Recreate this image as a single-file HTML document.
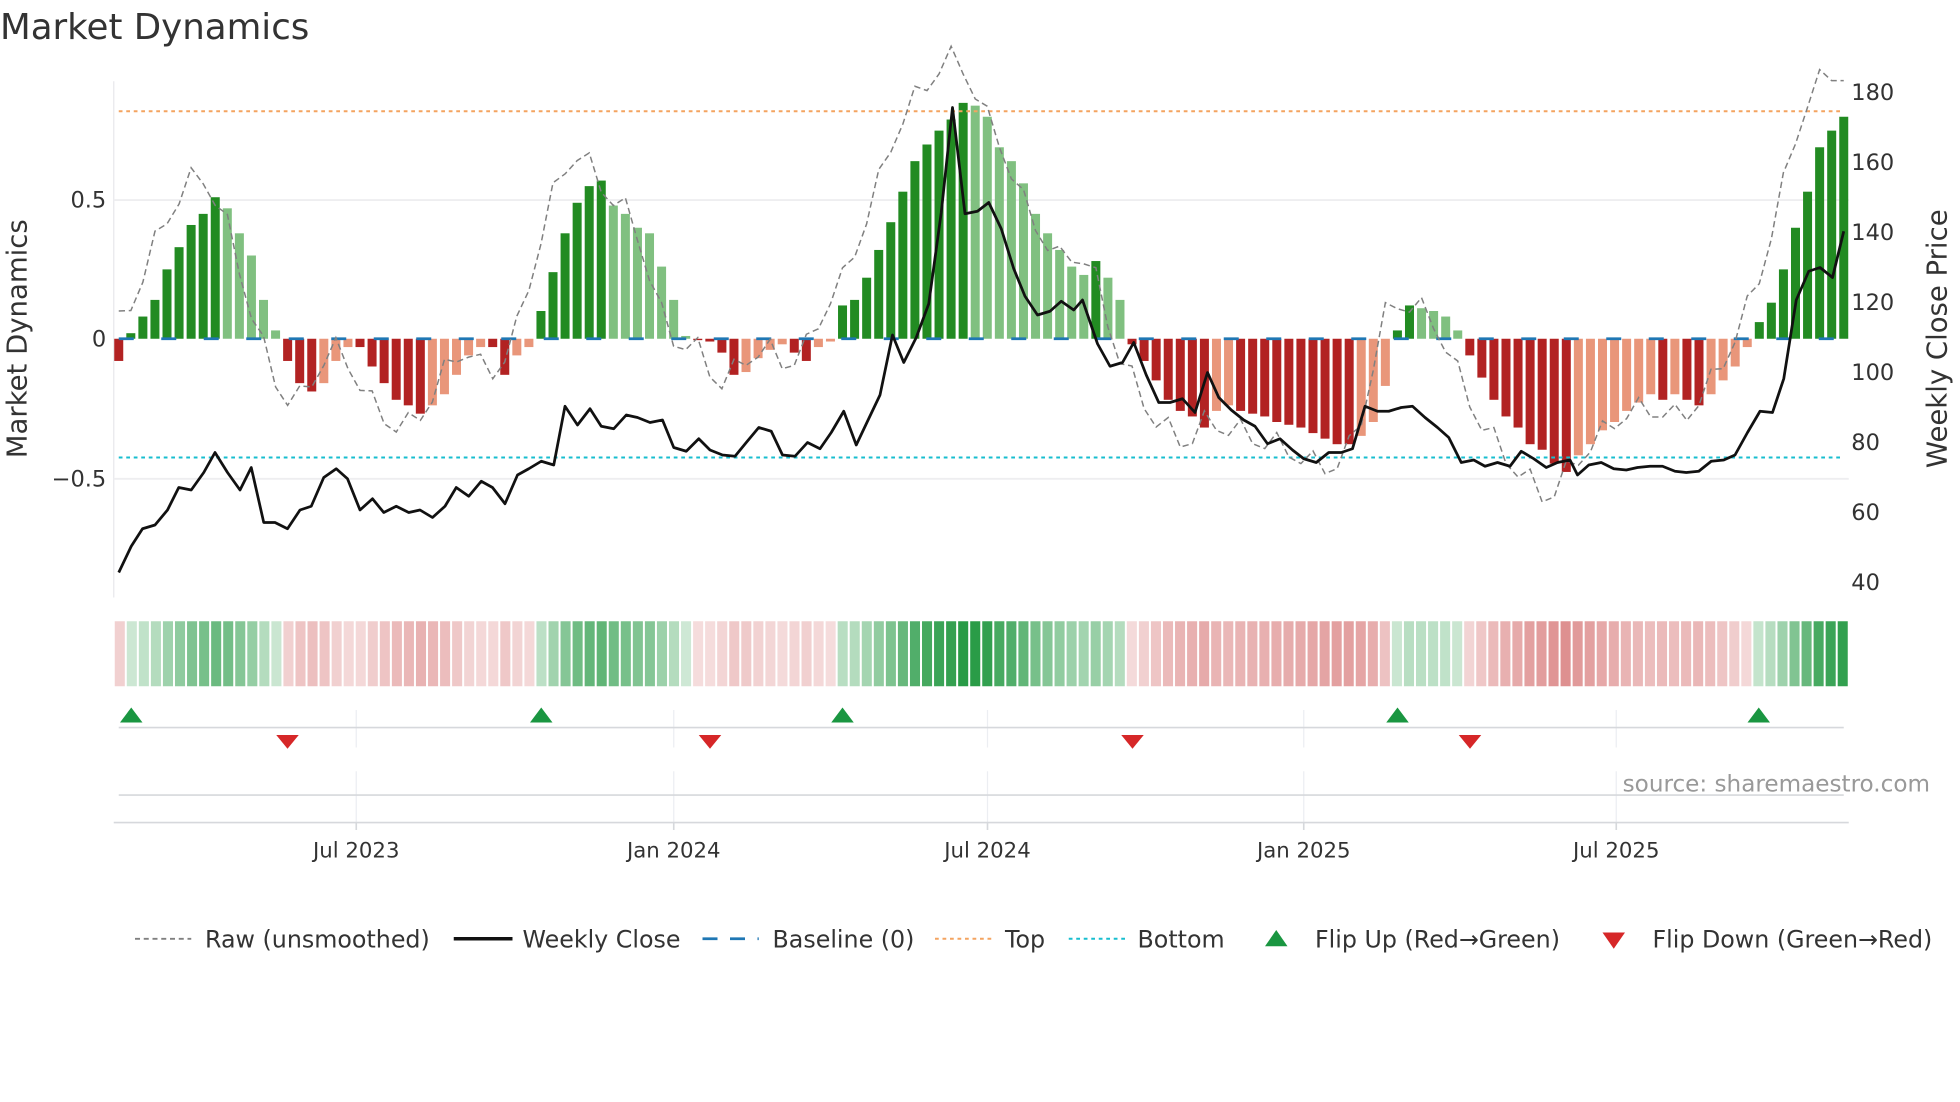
<!DOCTYPE html>
<html><head><meta charset="utf-8"><style>
html,body{margin:0;padding:0;background:#fff;width:1960px;height:1102px;overflow:hidden}
svg{display:block}
text{font-family:"DejaVu Sans","Liberation Sans",sans-serif}
</style></head><body>
<svg id="s" width="1960" height="1102" viewBox="0 0 1568 881.6" preserveAspectRatio="none" xmlns="http://www.w3.org/2000/svg">
<rect width="1568" height="882" fill="#fff"/>
<text x="0" y="31" font-size="28.5" fill="#333">Market Dynamics</text>
<line x1="91" y1="65" x2="91" y2="478" stroke="#e8e8ec" stroke-width="1"/>
<line x1="91" y1="160" x2="1479" y2="160" stroke="#eeeef0" stroke-width="1.5"/>
<line x1="91" y1="383" x2="1479" y2="383" stroke="#eeeef0" stroke-width="1.5"/>
<g id="bars"></g>
<line x1="95" y1="89" x2="1475" y2="89" stroke="#f4a460" stroke-width="1.6" stroke-dasharray="3,3"/>
<line x1="95" y1="366" x2="1475" y2="366" stroke="#17becf" stroke-width="1.6" stroke-dasharray="3,3"/>
<line x1="95" y1="271" x2="1475" y2="271" stroke="#1f77b4" stroke-width="2.2" stroke-dasharray="12,22"/>
<polyline id="raw" fill="none" stroke="#808080" stroke-width="1.2" stroke-dasharray="5,3"/>
<polyline id="price" fill="none" stroke="#111" stroke-width="2.2" stroke-linejoin="round"/>
<g font-size="18" fill="#333">
<text x="85" y="166" text-anchor="end">0.5</text>
<text x="85" y="277" text-anchor="end">0</text>
<text x="85" y="389" text-anchor="end">−0.5</text>
<text x="1481" y="80">180</text><text x="1481" y="136">160</text><text x="1481" y="192">140</text>
<text x="1481" y="248">120</text><text x="1481" y="304">100</text><text x="1481" y="360">80</text>
<text x="1481" y="416">60</text><text x="1481" y="472">40</text>
</g>
<text transform="translate(21,271) rotate(-90)" text-anchor="middle" font-size="22" fill="#333">Market Dynamics</text>
<text transform="translate(1557,271) rotate(-90)" text-anchor="middle" font-size="22" fill="#333">Weekly Close Price</text>
<g id="heat"></g>
<g stroke="#eceef2" stroke-width="1">
<line x1="285" y1="568" x2="285" y2="598"/><line x1="539" y1="568" x2="539" y2="598"/><line x1="790" y1="568" x2="790" y2="598"/><line x1="1043" y1="568" x2="1043" y2="598"/><line x1="1293" y1="568" x2="1293" y2="598"/>
<line x1="285" y1="617" x2="285" y2="658"/><line x1="539" y1="617" x2="539" y2="658"/><line x1="790" y1="617" x2="790" y2="658"/><line x1="1043" y1="617" x2="1043" y2="658"/><line x1="1293" y1="617" x2="1293" y2="658"/>
</g>
<line x1="95" y1="582" x2="1475" y2="582" stroke="#d6d8dc" stroke-width="1.3"/>
<line x1="95" y1="636" x2="1475" y2="636" stroke="#d6d8dc" stroke-width="1.3"/>
<line x1="91" y1="658" x2="1479" y2="658" stroke="#d6d8dc" stroke-width="1.3"/>
<g stroke="#d6d8dc" stroke-width="1.3"><line x1="285" y1="658" x2="285" y2="664"/><line x1="539" y1="658" x2="539" y2="664"/><line x1="790" y1="658" x2="790" y2="664"/><line x1="1043" y1="658" x2="1043" y2="664"/><line x1="1293" y1="658" x2="1293" y2="664"/></g>
<g id="flips"></g>
<text x="1544" y="633" text-anchor="end" font-size="18.5" fill="#999">source: sharemaestro.com</text>
<g font-size="17" fill="#333" text-anchor="middle">
<text x="285" y="686">Jul 2023</text><text x="539" y="686">Jan 2024</text><text x="790" y="686">Jul 2024</text><text x="1043" y="686">Jan 2025</text><text x="1293" y="686">Jul 2025</text>
</g>
<g font-size="19" fill="#333">
<line x1="108" y1="751" x2="153" y2="751" stroke="#808080" stroke-width="1.5" stroke-dasharray="4,3"/>
<text x="164" y="758">Raw (unsmoothed)</text>
<line x1="363" y1="751" x2="410" y2="751" stroke="#111" stroke-width="2.8"/>
<text x="418" y="758">Weekly Close</text>
<line x1="562" y1="751" x2="607" y2="751" stroke="#1f77b4" stroke-width="2.2" stroke-dasharray="12,10"/>
<text x="618" y="758">Baseline (0)</text>
<line x1="748" y1="751" x2="793" y2="751" stroke="#f4a460" stroke-width="1.6" stroke-dasharray="3,3"/>
<text x="804" y="758">Top</text>
<line x1="855" y1="751" x2="900" y2="751" stroke="#17becf" stroke-width="1.6" stroke-dasharray="3,3"/>
<text x="910" y="758">Bottom</text>
<polygon points="1012,757 1030,757 1021,744" fill="#1a9641"/>
<text x="1052" y="758">Flip Up (Red→Green)</text>
<polygon points="1282,746 1300,746 1291,759" fill="#d62728"/>
<text x="1322" y="758">Flip Down (Green→Red)</text>
</g>
</svg>
<script>
var v=[-0.08,.02,.08,.14,.25,.33,.41,.45,.51,.47,.38,.30,.14,.03,
-.08,-.16,-.19,-.16,-.08,-.03,-.03,-.10,-.16,-.22,-.24,-.27,-.24,-.20,-.13,-.06,-.03,-.03,-.13,-.06,-.03,
.10,.24,.38,.49,.55,.57,.48,.45,.40,.38,.26,.14,.01,
-.005,-.01,-.05,-.13,-.12,-.07,-.04,-.02,-.05,-.08,-.03,-.01,
.12,.14,.22,.32,.42,.53,.64,.70,.75,.79,.85,.84,.80,.69,.64,.56,.45,.38,.32,.26,.23,.28,.22,.14,
-.02,-.08,-.15,-.22,-.26,-.28,-.32,-.26,-.24,-.26,-.27,-.28,-.30,-.31,-.32,-.34,-.36,-.38,-.38,-.35,-.30,-.17,
.03,.12,.11,.10,.08,.03,
-.06,-.14,-.22,-.28,-.32,-.38,-.40,-.45,-.48,-.42,-.38,-.33,-.30,-.26,-.23,-.20,-.22,-.20,-.22,-.24,-.20,-.15,-.10,-.03,
.06,.13,.25,.40,.53,.69,.75,.80];
var N=v.length,x0=95,x1=1475,st=(x1-x0)/(N-1),Z=271,U=222;
var ns="http://www.w3.org/2000/svg";
function el(t,a,p){var e=document.createElementNS(ns,t);for(var k in a)e.setAttribute(k,a[k]);p.appendChild(e);return e;}
var B=document.getElementById('bars'),H=document.getElementById('heat');
var hx0=91,hw=(1479-91)/N;
for(var i=0;i<N;i++){
 var x=x0+st*i,val=v[i],p=i?v[i-1]:0,c;
 if(val>=0)c=(val>=p)?'#228b22':'#80c080';else c=(val<=p)?'#b22222':'#e9967a';
 var h=Math.abs(val)*U;
 el('rect',{x:x-3.6,y:val>=0?Z-h:Z,width:7.2,height:Math.max(h,0.5),fill:c},B);
 var a,col;
 if(val>=0){a=0.22+0.78*Math.min(val/0.85,1);col='rgba(40,155,70,'+a+')';}
 else{a=0.2+0.45*Math.min(-val/0.48,1);col='rgba(205,85,85,'+a+')';}
 el('rect',{x:hx0+hw*i+0.8,y:497,width:hw-1.6,height:52,fill:col},H);
}
var r=[];
for(var i=0;i<N;i++){var a=v[Math.min(i+1,N-1)],b=v[Math.min(i+2,N-1)];var rv=(a*0.6+b*0.6)+(i%3==0?0.04:-0.03);r.push((x0+st*i).toFixed(1)+','+(Z-rv*U).toFixed(1));}
document.getElementById('raw').setAttribute('points',r.join(' '));
var pp="95,458 105,437 114,423 124,420 134,408 143,390 153,392 163,378 172,362 182,378 192,392 201,374 211,418 220,418 230,423 240,408 249,405 259,382 269,375 278,383 288,408 298,399 307,410 317,405 327,410 336,408 346,414 356,405 365,390 375,397 385,385 394,390 404,403 414,380 423,375 433,369 443,372 452,325 462,340 472,327 481,341 491,343 501,332 510,334 520,338 530,336 539,358 549,361 559,351 568,360 578,364 588,365 597,354 607,342 617,345 626,364 636,365 646,354 656,359 665,346 675,329 685,356 694,337 704,316 714,268 723,290 733,270 743,243 753,170 762,86 772,171 782,169 791,162 801,183 811,215 820,237 830,252 840,249 849,241 859,248 866,240 878,275 888,293 898,290 907,274 917,300 927,322 936,322 946,319 956,330 966,298 975,318 985,328 995,336 1004,341 1014,355 1024,351 1034,360 1043,367 1053,370 1063,362 1073,362 1082,359 1092,325 1102,329 1111,329 1121,326 1130,325 1140,334 1150,342 1159,350 1169,370 1179,368 1188,373 1198,370 1208,373 1217,361 1227,367 1237,374 1246,370 1256,368 1262,380 1271,372 1281,370 1291,375 1301,376 1310,374 1320,373 1330,373 1340,377 1349,378 1359,377 1369,369 1379,368 1388,364 1398,346 1408,329 1418,330 1427,303 1437,240 1447,217 1456,214 1466,222 1475,185";
document.getElementById('price').setAttribute('points',pp);
var F=document.getElementById('flips');
[105,433,674,1118,1407].forEach(function(x){el('polygon',{points:(x-9)+',578 '+(x+9)+',578 '+x+',566',fill:'#1a9641'},F);});
[230,568,906,1176].forEach(function(x){el('polygon',{points:(x-9)+',588 '+(x+9)+',588 '+x+',599',fill:'#d62728'},F);});
</script>
</body></html>
